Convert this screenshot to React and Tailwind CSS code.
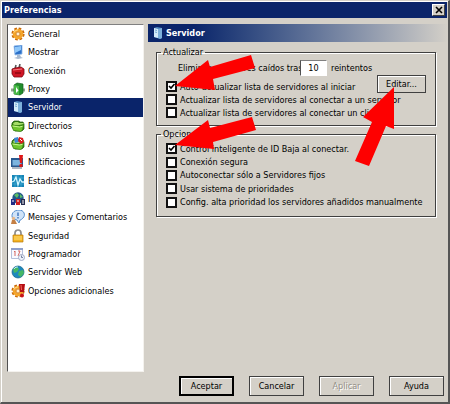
import React from 'react';

const Gear = () => (
  <>
    <circle cx="7" cy="7" r="5.3" fill="none" stroke="#c96a08" strokeWidth="2.6" strokeDasharray="2.5 1.66" />
    <circle cx="7" cy="7" r="3.7" fill="none" stroke="#f5a62b" strokeWidth="3" />
    <circle cx="7" cy="7" r="2" fill="#fff1cf" stroke="#c96a08" strokeWidth=".8" />
    <path d="M3 5.5A4.4 4.4 0 0 1 7 2.8" fill="none" stroke="#ffe09a" />
  </>
);

const Folder = () => (
  <>
    <path d="M1 4l2-2h5l1 1h3l1 2v5l-2 2H4L1 8z" fill="#347d16" stroke="#245c10" strokeWidth=".7" />
    <path d="M2 4.500l2-1.500h3l1 1h4l1 1-10 2z" fill="#a6dd68" />
    <path d="M.5 6l8 1 4-1-1 5-2 1.500-7-1z" fill="#70c52e" stroke="#35810f" strokeWidth=".7" />
    <path d="M1.500 7l7 1 3-.7" fill="none" stroke="#c9f58e" />
  </>
);

const Server = () => (
  <>
    <path d="M3 2l3-1 5 1v10l-2 1-6-2z" fill="#4e86bd" />
    <path d="M3 2l4 1v9l-4-1z" fill="#d3ebfa" />
    <path d="M7 3l4-1v10l-2 1-2-1z" fill="#7db0db" />
    <path d="M4 4l2 .5M4 6l2 .5" stroke="#5f99c7" strokeWidth=".8" />
  </>
);

const icons = {
  gear: <Gear />,
  folder: <Folder />,
  server: <Server />,
  monitor: (
    <>
      <path d="M3 1l8-1v9l-7 1z" fill="#2b6fc8" stroke="#8db8e8" strokeWidth=".8" />
      <path d="M4 2l6-1v4L4 8z" fill="#8ec7fa" />
      <path d="M6 10h3l1 2 2 1-5 1-4-1 3-1z" fill="#a8bad0" />
    </>
  ),
  plug: (
    <>
      <path d="M4 5l1-4M8 4l1-4" stroke="#555" strokeWidth="1.600" />
      <path d="M1 5l3-1 6-1 3 2v5l-2 3H3l-2-3z" fill="#cf1625" stroke="#7d0711" strokeWidth=".8" />
      <path d="M2 6l9-1" stroke="#f57d80" />
      <path d="M4 9h6" stroke="#8c0811" strokeWidth="1.500" />
    </>
  ),
  proxy: (
    <>
      <path d="M0 8h3M11 8h3" stroke="#8aa58a" strokeWidth="3" />
      <path d="M3 3l3-2 6 1v9l-3 2-6-1z" fill="#218d2c" stroke="#125f1b" strokeWidth=".7" />
      <path d="M3 3l5 1v9l-5-1z" fill="#49b947" />
      <path d="M5 5l2.500 3.500L5 11z" fill="#fff" />
    </>
  ),
  files: (
    <>
      <Folder />
      <path d="M3 1l4-1 1 5-4 1z" fill="#3e87d4" />
      <path d="M8 0l4 1 1 4-3 2-3-3z" fill="#d91f20" />
      <path d="M9 2l2 2" stroke="#fff" />
    </>
  ),
  notify: (
    <>
      <path d="M0 3h12v9H0z" fill="#28588f" />
      <path d="M1.500 5h9v5.500h-9z" fill="#7bb4df" />
      <path d="M1 13h10" stroke="#5f7186" />
      <path d="M8 0h4l-1 8H9z" fill="#de1717" />
      <circle cx="10" cy="10.500" r="1.700" fill="#de1717" />
    </>
  ),
  stats: (
    <>
      <path d="M1 1h12v12H1z" fill="#1583b5" />
      <path d="M4 1v12M7 1v12M10 1v12M1 4h12M1 10h12" stroke="#4bb2d9" strokeWidth=".6" />
      <path d="M1 8l2-1 2-4 2 8 2-6 2 3h2" fill="none" stroke="#d3f7ff" strokeWidth="1.300" />
    </>
  ),
  irc: (
    <>
      <circle cx="7" cy="6" r="5.700" fill="#21578a" />
      <path d="M3 3l3-2 2 2-2 3zM9 2l3 3-3 1z" fill="#5bbd65" />
      <path d="M0 7h4v6H0z" fill="#222c86" />
      <path d="M5 7h4v6H5z" fill="#cf2020" />
      <path d="M10 7h4v6h-4z" fill="#272c4d" />
      <path d="M1 9h2M6 9h2M11 9h2M11 11h2" stroke="#fff" />
    </>
  ),
  chat: (
    <>
      <path d="M2 9C-1 4 3 0 8 0s7 5 4 8c-1 1-2 2-3 2l-1 3-2-3z" fill="#cfe3f8" stroke="#558dcc" />
      <path d="M7 2.500v3.500M7 7v1.500" stroke="#3b72bd" strokeWidth="1.400" />
      <circle cx="2.500" cy="8.500" r="1.700" fill="#e5b78b" />
      <path d="M0 14l1-4h3l2 4z" fill="#c48045" />
    </>
  ),
  lock: (
    <>
      <path d="M4 7V4c0-4 6-4 6 0v3" fill="none" stroke="#8c8c8c" strokeWidth="1.700" />
      <path d="M2 6h10v7H2z" fill="#f4b321" stroke="#b87809" strokeWidth=".7" />
      <path d="M3 8h8M3 10h8" stroke="#ffdf79" />
    </>
  ),
  calendar: (
    <>
      <path d="M.5 1.500h11v10H.5z" fill="#f8faff" stroke="#b5bfda" />
      <path d="M0 2h12" stroke="#8e9fcb" strokeWidth="2" />
      <path d="M3 5l1-1v5M7 4h2L7 9" fill="none" stroke="#d66761" />
      <circle cx="10.500" cy="10.500" r="3" fill="#eef2fa" stroke="#a3adc6" />
      <path d="M10.500 8.500v2H12" fill="none" stroke="#56658b" strokeWidth=".8" />
    </>
  ),
  globe: (
    <>
      <circle cx="7" cy="7" r="6" fill="#1d88bd" stroke="#146384" strokeWidth=".7" />
      <path d="M2 4l4-2 2 2-2 3-3 1zM8 6l4-1 1 3-3 4-3-2z" fill="#45b765" />
      <path d="M3 4c1-2 3-2 4-2" fill="none" stroke="#c4f2f3" />
    </>
  ),
  extra: (
    <>
      <Gear />
      <path d="M8 0h6l-1 8H9z" fill="#b50d13" />
      <circle cx="11" cy="11.500" r="2" fill="#c91318" />
      <path d="M10 1l.5 5" stroke="#f26a5d" />
    </>
  ),
};

function Icon({ name }) {
  return (
    <svg viewBox="0 0 14 14" className="h-[14px] w-[14px] shrink-0" aria-hidden="true">
      {icons[name]}
    </svg>
  );
}

const sections = [
  ['General', 'gear'],
  ['Mostrar', 'monitor'],
  ['Conexión', 'plug'],
  ['Proxy', 'proxy'],
  ['Servidor', 'server'],
  ['Directorios', 'folder'],
  ['Archivos', 'files'],
  ['Notificaciones', 'notify'],
  ['Estadísticas', 'stats'],
  ['IRC', 'irc'],
  ['Mensajes y Comentarios', 'chat'],
  ['Seguridad', 'lock'],
  ['Programador', 'calendar'],
  ['Servidor Web', 'globe'],
  ['Opciones adicionales', 'extra'],
];

function Check({ label, checked = false }) {
  return (
    <label className="flex items-center gap-[3px] whitespace-nowrap">
      <span className="grid h-[11px] w-[11px] shrink-0">
        <input
          type="checkbox"
          defaultChecked={checked}
          className="peer col-start-1 row-start-1 h-[11px] w-[11px] appearance-none border-2 border-[#111] bg-white"
        />
        <svg viewBox="0 0 11 11" className="pointer-events-none invisible col-start-1 row-start-1 h-[11px] w-[11px] peer-checked:visible" aria-hidden="true">
          <path d="M3 5l2 2 3.500-4" fill="none" stroke="#000" strokeWidth="1.600" />
        </svg>
      </span>
      {label}
    </label>
  );
}

function Group({ title, children }) {
  return (
    <fieldset className="min-w-0 border border-[#404040] px-[9px] shadow-[1px_1px_0_#fff,inset_1px_1px_0_#fff]">
      <legend className="-ml-[5px] h-3 px-[2px] leading-3">{title}</legend>
      {children}
    </fieldset>
  );
}

function Button({ children, primary = false, disabled = false }) {
  return (
    <button
      type="button"
      disabled={disabled}
      className={
        'h-5 w-[55px] shadow-[inset_1px_1px_0_#fff] disabled:text-[#949088] disabled:[text-shadow:1px_1px_0_#fff] ' +
        (primary ? 'border-2 border-black' : 'border border-[#404040]')
      }
    >
      {children}
    </button>
  );
}

export default function App() {
  return (
    <div className="relative flex min-h-screen flex-col border-r-2 border-b-2 border-l border-t border-t-[#d4d0c8] border-l-[#d4d0c8] border-r-[#555] border-b-[#555] bg-[#d4d0c8] font-['DejaVu_Sans_Condensed','DejaVu_Sans',sans-serif] text-[9px] leading-3 text-black shadow-[inset_1px_1px_0_#fff]">
      <header className="mx-px mt-px flex h-4 items-center justify-between bg-[#0a246a] pr-[2px] pl-[2px] text-white">
        <h1 className="font-bold">Preferencias</h1>
        <button type="button" aria-label="Cerrar" className="grid h-3 w-[13px] place-items-center border border-t-white border-l-white border-r-[#404040] border-b-[#404040] bg-[#d4d0c8]">
          <svg viewBox="0 0 8 8" className="h-2 w-2" aria-hidden="true">
            <path d="M1 1l6 6M7 1L1 7" stroke="#000" strokeWidth="1.600" />
          </svg>
        </button>
      </header>

      <div className="mt-[6px] flex flex-1 gap-1 pl-[6px]">
        <nav className="mb-[30px] w-[137px] shrink-0 border border-t-[#808080] border-l-[#505050] border-r-[#f4f2ee] border-b-[#f4f2ee] bg-white">
          <ul className="grid h-[275px] auto-rows-fr">
            {sections.map(([name, icon]) => (
              <li key={name} className={name === 'Servidor' ? 'bg-[#0a246a] text-white' : ''}>
                <button type="button" className="flex h-full w-full items-center gap-[3px] pl-[3px] text-left whitespace-nowrap">
                  <Icon name={icon} />
                  {name}
                </button>
              </li>
            ))}
          </ul>
        </nav>

        <main className="flex min-w-0 flex-1 flex-col">
          <h2 className="flex h-[18px] items-center gap-px bg-linear-to-r from-[#0a246a] from-15% to-[#d4d0c8] pl-[3px] font-bold text-white">
            <Icon name="server" />
            Servidor
          </h2>

          <div className="mt-1 mr-3 ml-2 flex flex-col gap-[2px]">
            <Group title="Actualizar">
              <div className="mt-[2px] flex items-center pl-3 whitespace-nowrap">
                <label htmlFor="retries" className="w-[122px]">Eliminar servidores caídos tras</label>
                <input
                  id="retries"
                  type="text"
                  defaultValue="10"
                  className="h-4 w-[27px] border border-t-[#808080] border-l-[#505050] border-r-white border-b-white bg-white text-center"
                />
                <span className="ml-1">reintentos</span>
              </div>
              <div className="relative grid h-[49px] auto-rows-[13px] content-start pt-1">
                <Check label="Auto-actualizar lista de servidores al iniciar" checked />
                <Check label="Actualizar lista de servidores al conectar a un servidor" />
                <Check label="Actualizar lista de servidores al conectar un cliente" />
                <button type="button" className="absolute -top-px right-0 h-[18px] w-[49px] border border-[#404040] bg-[#d4d0c8] shadow-[inset_1px_1px_0_#fff]">
                  Editar...
                </button>
              </div>
            </Group>

            <Group title="Opciones">
              <div className="grid h-[76px] auto-rows-fr pt-[2px] pb-[7px]">
                <Check label="Control inteligente de ID Baja al conectar." checked />
                <Check label="Conexión segura" />
                <Check label="Autoconectar sólo a Servidores fijos" />
                <Check label="Usar sistema de prioridades" />
                <Check label="Config. alta prioridad los servidores añadidos manualmente" />
              </div>
            </Group>
          </div>

          <footer className="mt-auto mr-1 mb-[6px] flex justify-end gap-[15px]">
            <Button primary>Aceptar</Button>
            <Button>Cancelar</Button>
            <Button disabled>Aplicar</Button>
            <Button>Ayuda</Button>
          </footer>
        </main>
      </div>

      <svg viewBox="0 0 450 404" className="pointer-events-none absolute -top-px -left-px h-[404px] w-[450px]" fill="#fe0000" aria-hidden="true">
        <path d="M175 86L208 60l2 7 41-12 4 13-42 11 2 11z" />
        <path d="M175 145l33-25 2 8 42-11 4 13-43 12 1 7z" />
        <path d="M394 87v42l-8-3-17 40-14-5 17-39-9-5z" />
      </svg>
    </div>
  );
}
